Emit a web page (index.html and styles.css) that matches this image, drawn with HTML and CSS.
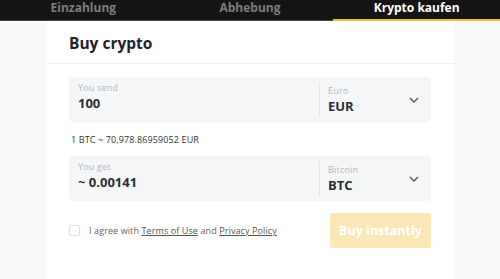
FILE: index.html
```html
<!DOCTYPE html>
<html>
<head>
<meta charset="utf-8">
<link rel="stylesheet" href="styles.css">
</head>
<body>
<nav class="tabs">
  <div class="tab">Einzahlung</div>
  <div class="tab">Abhebung</div>
  <div class="tab active">Krypto kaufen</div>
</nav>
<main class="card">
  <h1 class="title">Buy crypto</h1>
  <div class="body">
    <div class="field">
      <div class="amount">
        <div class="label">You send</div>
        <div class="value">100</div>
      </div>
      <div class="currency">
        <div class="ccy">
          <div class="label">Euro</div>
          <div class="value">EUR</div>
        </div>
        <svg class="chev" width="10" height="6" viewBox="0 0 10 6"><path d="M1 1l4 4 4-4" fill="none" stroke="#555" stroke-width="1.4"/></svg>
      </div>
    </div>
    <div class="rate">1 BTC ~ 70,978.86959052 EUR</div>
    <div class="field">
      <div class="amount">
        <div class="label">You get</div>
        <div class="value">~ 0.00141</div>
      </div>
      <div class="currency">
        <div class="ccy">
          <div class="label">Bitcoin</div>
          <div class="value">BTC</div>
        </div>
        <svg class="chev" width="10" height="6" viewBox="0 0 10 6"><path d="M1 1l4 4 4-4" fill="none" stroke="#555" stroke-width="1.4"/></svg>
      </div>
    </div>
    <div class="footer">
      <label class="agree"><span class="box"></span><span>I agree with <u>Terms of Use</u> and <u>Privacy Policy</u></span></label>
      <button class="buy">Buy instantly</button>
    </div>
  </div>
</main>
</body>
</html>
```
FILE: styles.css
```css
* { box-sizing: border-box; }
html, body { margin: 0; padding: 0; }
body {
  background: #f9f9f9;
  font-family: "Open Sans", "DejaVu Sans", sans-serif;
  color: #222;
  height: 279px;
  overflow: hidden;
}
.tabs {
  display: flex;
  background: #141414;
  height: 21px;
}
.tab {
  flex: 1;
  text-align: center;
  color: #7d7d7d;
  font-weight: 700;
  font-size: 12px;
  line-height: 18px;
  border-bottom: 1px solid #4a463f;
  margin-top: -2px;
  height: 23px;
  padding-top: 1px;
}
.tab.active {
  color: #fff;
  border-bottom: 2px solid #f3bb3c;
}
.card {
  background: #fff;
  margin: 0 46px;
  height: 258px;
}
.title {
  margin: 0;
  font-size: 15.5px;
  font-weight: 700;
  color: #1f2328;
  padding: 11px 23px 0;
  height: 43px;
  border-bottom: 1px solid #eef0f3;
}
.body {
  padding: 13px 23px 0;
}
.field {
  display: flex;
  background: #f5f6f8;
  border-radius: 4px;
  height: 45px;
  align-items: stretch;
}
.amount {
  flex: 1;
  padding: 5px 9px 0;
}
.label {
  font-size: 9px;
  color: #b4b6ba;
  line-height: 12px;
  letter-spacing: 0.2px;
}
.value {
  font-size: 13px;
  font-weight: 700;
  color: #2b2e33;
  line-height: 18px;
}
.currency {
  width: 112px;
  display: flex;
  align-items: center;
  margin: 5px 0;
  border-left: 1px solid #e3e5e8;
  padding: 0 12px 0 8px;
}
.ccy { flex: 1; padding-top: 1px; }
.chev { display: block; }
.rate {
  font-size: 9px;
  letter-spacing: 0.12px;
  color: #333;
  height: 34px;
  line-height: 35px;
  padding-left: 2px;
}
.footer {
  display: flex;
  align-items: center;
  justify-content: space-between;
  margin-top: 12px;
}
.agree {
  display: flex;
  align-items: center;
  font-size: 9px;
  letter-spacing: 0.1px;
  color: #666;
}
.box {
  width: 11px;
  height: 11px;
  border: 1px solid #dcdfe3;
  border-radius: 2px;
  margin-right: 9px;
}
.agree u { color: #555; }
.buy {
  width: 101px;
  height: 35px;
  border: 0;
  border-radius: 3px;
  background: #fbe6b6;
  color: #fff;
  font-family: inherit;
  font-size: 12.5px;
  font-weight: 700;
  padding: 0;
}
```
